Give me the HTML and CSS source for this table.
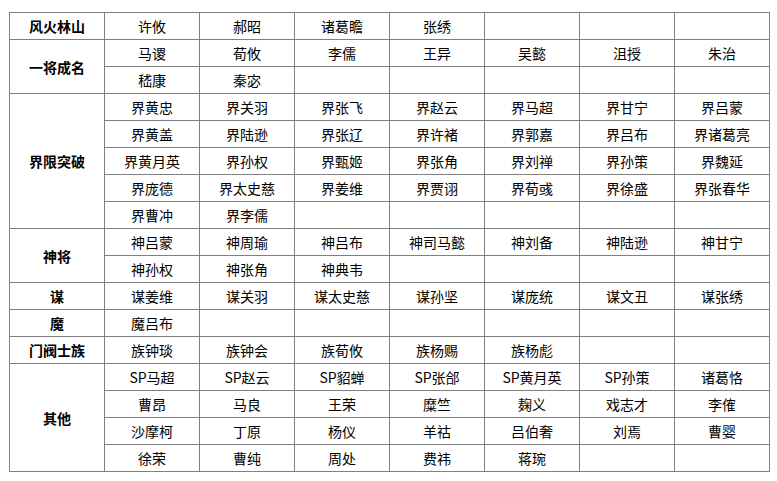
FILE: index.html
```html
<!DOCTYPE html>
<html lang="zh">
<head>
<meta charset="utf-8">
<link rel="stylesheet" href="styles.css">
</head>
<body>
<table class="grid">
<colgroup><col><col><col><col><col><col><col><col></colgroup>
<tbody>
<tr><td class="cat">风火林山</td><td>许攸</td><td>郝昭</td><td>诸葛瞻</td><td>张绣</td><td></td><td></td><td></td></tr>
<tr><td class="cat" rowspan="2">一将成名</td><td>马谡</td><td>荀攸</td><td>李儒</td><td>王异</td><td>吴懿</td><td>沮授</td><td>朱治</td></tr>
<tr><td>嵇康</td><td>秦宓</td><td></td><td></td><td></td><td></td><td></td></tr>
<tr><td class="cat" rowspan="5">界限突破</td><td>界黄忠</td><td>界关羽</td><td>界张飞</td><td>界赵云</td><td>界马超</td><td>界甘宁</td><td>界吕蒙</td></tr>
<tr><td>界黄盖</td><td>界陆逊</td><td>界张辽</td><td>界许褚</td><td>界郭嘉</td><td>界吕布</td><td>界诸葛亮</td></tr>
<tr><td>界黄月英</td><td>界孙权</td><td>界甄姬</td><td>界张角</td><td>界刘禅</td><td>界孙策</td><td>界魏延</td></tr>
<tr><td>界庞德</td><td>界太史慈</td><td>界姜维</td><td>界贾诩</td><td>界荀彧</td><td>界徐盛</td><td>界张春华</td></tr>
<tr><td>界曹冲</td><td>界李儒</td><td></td><td></td><td></td><td></td><td></td></tr>
<tr><td class="cat" rowspan="2">神将</td><td>神吕蒙</td><td>神周瑜</td><td>神吕布</td><td>神司马懿</td><td>神刘备</td><td>神陆逊</td><td>神甘宁</td></tr>
<tr><td>神孙权</td><td>神张角</td><td>神典韦</td><td></td><td></td><td></td><td></td></tr>
<tr><td class="cat">谋</td><td>谋姜维</td><td>谋关羽</td><td>谋太史慈</td><td>谋孙坚</td><td>谋庞统</td><td>谋文丑</td><td>谋张绣</td></tr>
<tr><td class="cat">魔</td><td>魔吕布</td><td></td><td></td><td></td><td></td><td></td><td></td></tr>
<tr><td class="cat">门阀士族</td><td>族钟琰</td><td>族钟会</td><td>族荀攸</td><td>族杨赐</td><td>族杨彪</td><td></td><td></td></tr>
<tr><td class="cat" rowspan="4">其他</td><td>SP马超</td><td>SP赵云</td><td>SP貂蝉</td><td>SP张郃</td><td>SP黄月英</td><td>SP孙策</td><td>诸葛恪</td></tr>
<tr><td>曹昂</td><td>马良</td><td>王荣</td><td>糜竺</td><td>麹义</td><td>戏志才</td><td>李傕</td></tr>
<tr><td>沙摩柯</td><td>丁原</td><td>杨仪</td><td>羊祜</td><td>吕伯奢</td><td>刘焉</td><td>曹婴</td></tr>
<tr><td>徐荣</td><td>曹纯</td><td>周处</td><td>费祎</td><td>蒋琬</td><td></td><td></td></tr>
</tbody>
</table>
</body>
</html>
```
FILE: styles.css
```css
html, body {
  margin: 0;
  padding: 0;
  background: #ffffff;
}
body {
  font-family: "Noto Sans CJK SC", "Noto Sans", sans-serif;
  font-size: 14px;
  color: #000000;
}
.grid {
  margin: 12px 0 0 9px;
  border-collapse: collapse;
  table-layout: fixed;
  width: 760px;
}
.grid col {
  width: 95px;
}
.grid td {
  border: 1px solid #808080;
  height: 26px;
  padding: 0;
  text-align: center;
  vertical-align: middle;
  line-height: 16px;
}
.grid td.cat {
  font-weight: bold;
}
```
